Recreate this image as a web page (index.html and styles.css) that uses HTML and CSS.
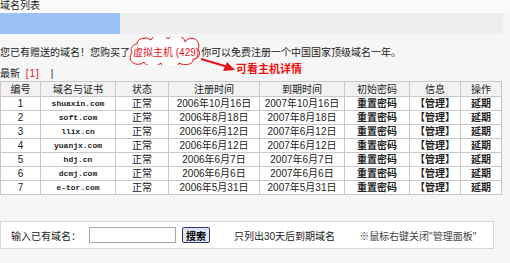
FILE: index.html
```html
<!DOCTYPE html>
<html lang="zh-CN">
<head>
    <meta charset="UTF-8">
    <title>域名列表</title>
    <link rel="stylesheet" href="styles.css">
</head>
<body>
    <div class="page-title">域名列表</div>
    <div class="progress-bar"><div class="progress-fill"></div></div>

    <!-- gift notice -->
    <div class="notice">
        您已有赠送的域名！您购买了<span class="host-tag"><svg class="cloud" viewBox="0 0 78 28" width="78" height="28"><path d="M6,16 A6,6 0 0 1 11,7 A8,6 0 0 1 25,3 A9,6 0 0 1 42,2 A9,6 0 0 1 59,5 A7,7 0 0 1 72,12 A6,6 0 0 1 67,22 A8,5 0 0 1 53,26 A9,5 0 0 1 35,26 A9,5 0 0 1 18,25 A7,6 0 0 1 6,16 Z" fill="#fff" stroke="#e4141b" stroke-width="1"/></svg><span class="host-text">虚拟主机 (429)</span></span>你可以免费注册一个中国国家顶级域名一年。
        <svg class="arrow" viewBox="0 0 36 16" width="36" height="16"><line x1="1" y1="2" x2="28" y2="10" stroke="#e4141b" stroke-width="2"/><polygon points="35,13 23,14 27,5" fill="#e4141b"/></svg>
        <span class="host-link">可看主机详情</span>
    </div>

    <div class="latest">最新 <span class="red">[1]</span> <span class="sep">|</span></div>

    <table class="domains">
        <thead>
            <tr>
                <th class="c-id">编号</th>
                <th class="c-name">域名与证书</th>
                <th class="c-state">状态</th>
                <th class="c-reg">注册时间</th>
                <th class="c-exp">到期时间</th>
                <th class="c-pwd">初始密码</th>
                <th class="c-info">信息</th>
                <th class="c-op">操作</th>
            </tr>
        </thead>
        <tbody>
            <tr><td>1</td><td class="mono">shuaxin.com</td><td>正常</td><td class="date">2006年10月16日</td><td class="date">2007年10月16日</td><td class="strong">重置密码</td><td class="strong">【管理】</td><td class="strong">延期</td></tr>
            <tr><td>2</td><td class="mono">soft.com</td><td>正常</td><td class="date">2006年8月18日</td><td class="date">2007年8月18日</td><td class="strong">重置密码</td><td class="strong">【管理】</td><td class="strong">延期</td></tr>
            <tr><td>3</td><td class="mono">llix.cn</td><td>正常</td><td class="date">2006年6月12日</td><td class="date">2007年6月12日</td><td class="strong">重置密码</td><td class="strong">【管理】</td><td class="strong">延期</td></tr>
            <tr><td>4</td><td class="mono">yuanjx.com</td><td>正常</td><td class="date">2006年6月12日</td><td class="date">2007年6月12日</td><td class="strong">重置密码</td><td class="strong">【管理】</td><td class="strong">延期</td></tr>
            <tr><td>5</td><td class="mono">hdj.cn</td><td>正常</td><td class="date">2006年6月7日</td><td class="date">2007年6月7日</td><td class="strong">重置密码</td><td class="strong">【管理】</td><td class="strong">延期</td></tr>
            <tr><td>6</td><td class="mono">dcmj.com</td><td>正常</td><td class="date">2006年6月6日</td><td class="date">2007年6月6日</td><td class="strong">重置密码</td><td class="strong">【管理】</td><td class="strong">延期</td></tr>
            <tr><td>7</td><td class="mono">e-tor.com</td><td>正常</td><td class="date">2006年5月31日</td><td class="date">2007年5月31日</td><td class="strong">重置密码</td><td class="strong">【管理】</td><td class="strong">延期</td></tr>
        </tbody>
    </table>

    <!-- search box -->
    <div class="search-bar">
        <span class="search-label">输入已有域名：</span>
        <input type="text" class="search-input">
        <button class="search-button">搜索</button>
        <span class="search-hint">只列出30天后到期域名</span>
        <span class="search-tip">※鼠标右键关闭"管理面板"</span>
    </div>
</body>
</html>
```

FILE: styles.css
```css
body {
    margin: 0;
    padding: 0;
    background-color: #f6f6f6;
    color: #222;
    font-family: "Liberation Sans", "Noto Sans CJK SC", sans-serif;
    font-size: 10px;
}

.page-title {
    height: 13px;
    line-height: 12px;
    padding-left: 0;
    background-color: #fbfbfb;
}

.progress-bar {
    width: 503px;
    height: 21px;
    background-color: #eeeeee;
}

.progress-fill {
    width: 120px;
    height: 100%;
    background-color: #9bc3f5;
}

.notice {
    position: relative;
    height: 33px;
    padding-top: 12px;
    line-height: 13px;
    box-sizing: border-box;
}

.host-tag {
    position: relative;
    display: inline-block;
    margin: 0 2px 0 3px;
}

.host-tag .cloud {
    position: absolute;
    left: -7px;
    top: -9px;
}

.host-text {
    position: relative;
    color: #e4141b;
}

.notice .arrow {
    position: absolute;
    left: 200px;
    top: 23px;
}

.host-link {
    position: absolute;
    left: 236px;
    top: 29px;
    line-height: 12px;
    color: #f01010;
    font-weight: bold;
    font-size: 11px;
}

.latest {
    height: 14px;
    line-height: 14px;
}

.red {
    color: #e4141b;
    margin-left: 3px;
    letter-spacing: 1px;
}

.sep {
    margin-left: 8px;
}

table.domains {
    width: 494px;
    border-collapse: collapse;
    table-layout: fixed;
    background-color: #fff;
}

.domains th, .domains td {
    height: 13px;
    padding: 0;
    border: 1px solid #c8c8c8;
    text-align: center;
    line-height: 13px;
    font-weight: normal;
    white-space: nowrap;
    overflow: hidden;
}

.domains th {
    background-color: #f2f2f2;
    height: 14px;
}

.c-id { width: 39px; }
.c-name { width: 74px; }
.c-state { width: 52px; }
.c-reg { width: 90px; }
.c-exp { width: 84px; }
.c-pwd { width: 64px; }
.c-info { width: 50px; }
.c-op { width: 40px; }

.domains td.mono {
    font-family: "Liberation Mono", monospace;
    font-size: 8px;
    font-weight: bold;
}

.domains td.date {
    font-size: 10px;
}

.domains td.strong {
    font-weight: bold;
}

.search-bar {
    display: flex;
    align-items: center;
    width: 492px;
    height: 26px;
    margin-top: 26px;
    background-color: #fff;
    border: 1px solid #d6d6d6;
}

.search-label {
    margin-left: 10px;
    width: 78px;
}

.search-input {
    width: 85px;
    height: 14px;
    margin: 0;
    padding: 0;
    border: 1px solid #a8a8a8;
}

.search-button {
    margin-left: 6px;
    width: 28px;
    height: 16px;
    padding: 0;
    border: 1px solid #2c3a6e;
    border-radius: 2px;
    background-color: #dde4f0;
    font-family: "Noto Sans CJK SC", sans-serif;
    font-size: 10px;
    font-weight: bold;
    line-height: 13px;
}

.search-hint {
    margin-left: 24px;
}

.search-tip {
    margin-left: 24px;
    color: #444;
}
```
